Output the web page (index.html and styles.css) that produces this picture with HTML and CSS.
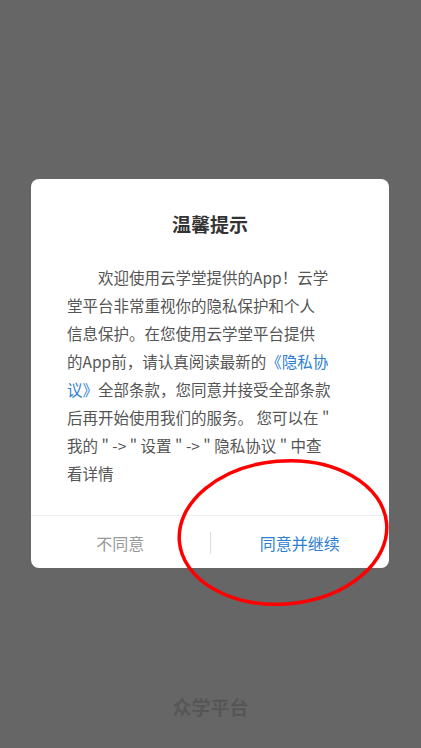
FILE: index.html
```html
<!DOCTYPE html>
<html lang="zh-CN">
<head>
<meta charset="utf-8">
<link rel="stylesheet" href="styles.css">
</head>
<body>
<div class="screen">
  <div class="dialog">
    <div class="dialog-title">温馨提示</div>
    <p class="dialog-body">欢迎使用云学堂提供的App！云学<br>堂平台非常重视你的隐私保护和个人<br>信息保护。在您使用云学堂平台提供<br>的App前，请认真阅读最新的<span class="link">《隐私协<br>议》</span>全部条款，您同意并接受全部条款<br>后再开始使用我们的服务。 您可以在 "<br>我的 " -&gt; " 设置 " -&gt; " 隐私协议 " 中查<br>看详情</p>
    <div class="dialog-actions">
      <div class="btn btn-cancel">不同意</div>
      <div class="btn-sep"></div>
      <div class="btn btn-ok">同意并继续</div>
    </div>
  </div>
  <div class="brand">众学平台</div>
  <svg class="annotation" width="421" height="748" viewBox="0 0 421 748">
    <ellipse cx="283" cy="532.5" rx="104" ry="71.5" transform="rotate(-5 283 532.5)" fill="none" stroke="#ff0000" stroke-width="3.5"/>
  </svg>
</div>
</body>
</html>
```
FILE: styles.css
```css
html, body {
  margin: 0;
  padding: 0;
}
body {
  background: #666666;
  font-family: "Noto Sans CJK SC", "Noto Sans", sans-serif;
}
.screen {
  position: relative;
  width: 421px;
  height: 748px;
  overflow: hidden;
  padding-top: 179px;
  box-sizing: border-box;
}
.dialog {
  margin: 0 32px 0 31px;
  background: #ffffff;
  border-radius: 8px;
  overflow: hidden;
}
.dialog-title {
  padding-top: 32px;
  text-align: center;
  font-size: 19px;
  line-height: 26px;
  font-weight: bold;
  color: #333333;
}
.dialog-body {
  margin: 26px 0 0 36px;
  padding-bottom: 28px;
  font-size: 15.5px;
  line-height: 28px;
  color: #555555;
  text-indent: 2em;
  white-space: nowrap;
}
.link {
  color: #2d80d2;
}
.dialog-actions {
  display: flex;
  align-items: center;
  height: 52px;
  border-top: 1px solid #eeeeee;
}
.btn {
  flex: 1;
  text-align: center;
  font-size: 16px;
  line-height: 22px;
  padding-top: 2px;
}
.btn-cancel {
  color: #999999;
}
.btn-ok {
  color: #2d80d2;
}
.btn-sep {
  width: 1px;
  height: 22px;
  background: #dddddd;
  margin-top: 2px;
}
.brand {
  margin-top: 126px;
  text-align: center;
  font-size: 19px;
  line-height: 26px;
  font-weight: bold;
  color: #565656;
}
.annotation {
  position: absolute;
  left: 0;
  top: 0;
  pointer-events: none;
}
```
